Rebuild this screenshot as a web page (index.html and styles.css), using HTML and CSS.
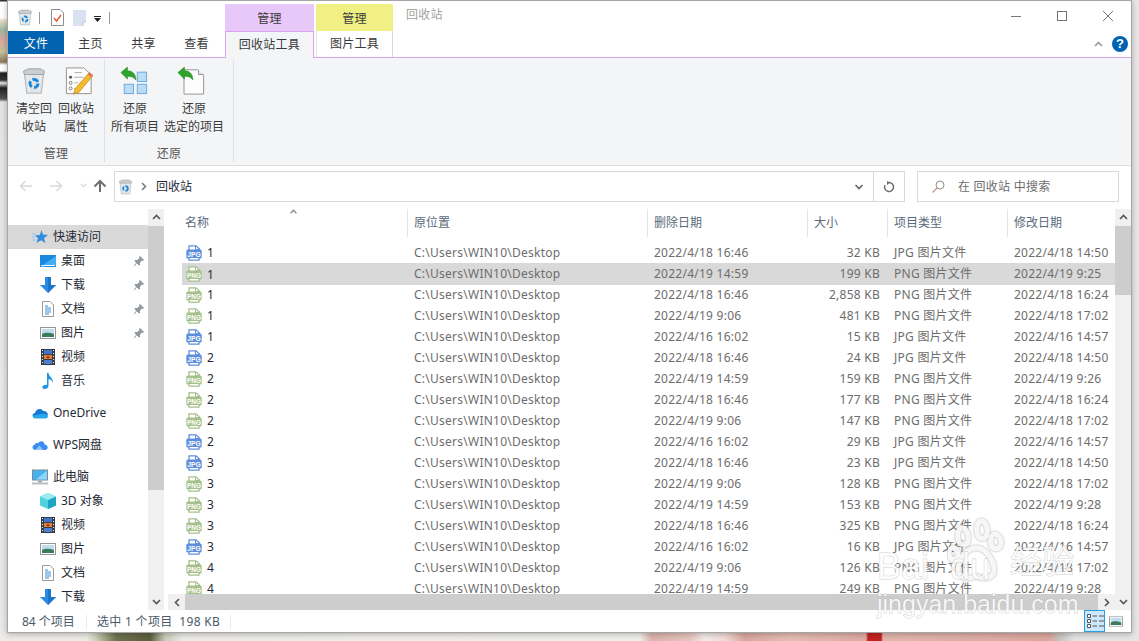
FILE: index.html
```html
<!DOCTYPE html>
<html lang="zh-CN">
<head>
<meta charset="utf-8">
<title>回收站</title>
<link rel="stylesheet" href="styles.css">
</head>
<body class="desktop">
<svg class="defs" width="0" height="0" aria-hidden="true">
  <symbol id="bin" viewBox="0 0 32 34">
    <path d="M4 6 L28 6 L25 32 L7 32 Z" fill="#dfe3e6" stroke="#a3a8ac"/>
    <path d="M3 5 L9 2 L24 2 L29 5 L28 9 L4 9 Z" fill="#c9ced2" stroke="#969a9e"/>
    <path d="M8 10 L10 30 M24 10 L22 30 M12 10 L13 14 M20 10 L19 14" stroke="#f5f6f7" stroke-width="1.200"/>
    <circle cx="16" cy="20" r="5" fill="none" stroke="#1c86d8" stroke-width="3.600" stroke-dasharray="7.500 3"/>
  </symbol>
  <symbol id="checkdoc" viewBox="0 0 13 17">
    <path d="M.5.5 H9 L12.500 4 V16.500 H.5 Z" fill="#fff" stroke="#8c8c8c"/>
    <path d="M3 9 L5.500 12 L10 6" fill="none" stroke="#e2572b" stroke-width="1.400"/>
  </symbol>
  <symbol id="blankdoc" viewBox="0 0 13 16">
    <path d="M0 0 H13 V11 L10 16 H0 Z" fill="#d8e2f1"/>
    <path d="M10 16 V12 H13" fill="#fff" stroke="#b9c8dd"/>
  </symbol>
  <symbol id="props" viewBox="0 0 30 30">
    <path d="M1.500 1 H20 L28 8 V28.500 H1.500 Z" fill="#fdfdfd" stroke="#8f8f8f"/>
    <circle cx="6" cy="11" r="1.600" fill="#555"/><circle cx="6" cy="17" r="1.600" fill="none" stroke="#777"/><circle cx="6" cy="23" r="1.600" fill="none" stroke="#777"/>
    <path d="M10 6 H18 M10 11 H20 M10 17 H14 M10 23 H12" stroke="#a8a8a8"/>
    <path d="M26 6 L30 9 L15 27 L9 29 L11 23 Z" fill="#f4bb2c" stroke="#b9820f" stroke-width=".7"/>
    <path d="M26 6 L30 9 L28.300 11 L24.300 8 Z" fill="#e8706a"/>
  </symbol>
  <symbol id="restoreall" viewBox="0 0 30 30">
    <rect x="18.500" y="5.500" width="10" height="10" fill="#b9dcf8" stroke="#6ba6d8"/>
    <rect x="4.500" y="18.500" width="10" height="10" fill="#b9dcf8" stroke="#6ba6d8"/>
    <rect x="18.500" y="18.500" width="10" height="10" fill="#b9dcf8" stroke="#6ba6d8"/>
    <path d="M1 6 L8 0 V4 C13 4 17 7 17 14 C15 11 12 10 8 10 V13 Z" fill="#2ea52a" stroke="#1c7a1a" stroke-width=".5"/>
  </symbol>
  <symbol id="restoresel" viewBox="0 0 30 30">
    <path d="M7.500 3 H22 L28.500 9 V29 H7.500 Z" fill="#fdfdfd" stroke="#8f8f8f"/>
    <path d="M23 3 V8 H28.500" fill="#e8e8e8" stroke="#8f8f8f"/>
    <path d="M1 6 L8 0 V4 C13 4 17 7 17 14 C15 11 12 10 8 10 V13 Z" fill="#2ea52a" stroke="#1c7a1a" stroke-width=".5"/>
  </symbol>
  <symbol id="jpg" viewBox="0 0 16 16">
    <path d="M3 6 V.8 H10 L13.500 4 V6" fill="#fff" stroke="#5f8fdc" stroke-width="1.300"/>
    <path d="M9.500 1 V4.500 H13.500" fill="none" stroke="#5f8fdc"/>
    <rect x=".3" y="4.500" width="15.400" height="9" rx="1.500" fill="#5f8fdc"/>
    <path d="M3 13 V15.200 H13 V13" fill="#fff" stroke="#5f8fdc" stroke-width="1.300"/>
    <text x="8" y="11.700" class="ftext" textLength="13.500" lengthAdjust="spacingAndGlyphs">JPG</text>
  </symbol>
  <symbol id="png" viewBox="0 0 16 16">
    <path d="M3 6 V.8 H10 L13.500 4 V6" fill="#fff" stroke="#a5c08a" stroke-width="1.300"/>
    <path d="M9.500 1 V4.500 H13.500" fill="none" stroke="#a5c08a"/>
    <rect x=".3" y="4.500" width="15.400" height="9" rx="1.500" fill="#a5c08a"/>
    <path d="M3 13 V15.200 H13 V13" fill="#fff" stroke="#a5c08a" stroke-width="1.300"/>
    <text x="8" y="11.700" class="ftext" textLength="14" lengthAdjust="spacingAndGlyphs">PNG</text>
  </symbol>
  <symbol id="star" viewBox="0 0 16 16">
    <path d="M9.500 1 L11 5.500 L16 6 L12 9 L13.500 14 L9 11.200 L4.500 14 L6 9.300 L3 6.500 L8 5.800 Z" fill="#2f8fdc"/>
    <path d="M0 5 H4 M0 8 H3 M0 11 H4" stroke="#8ec7f2"/>
  </symbol>
  <symbol id="desk" viewBox="0 0 16 12">
    <rect width="16" height="12" fill="#1a8ae0"/>
    <path d="M16 1 V10 H3 Z" fill="#46aef0"/>
    <rect x="1" y="10" width="14" height="1" fill="#fff"/>
    <rect x="1" y="10.500" width="4" height="1" fill="#9ad4f8"/>
  </symbol>
  <symbol id="down" viewBox="0 0 16 16">
    <path d="M5 0 H11 V8 H16 L8 16 L0 8 H5 Z" fill="#2c8be0"/>
    <path d="M8 0 H11 V8 H16 L8 16 Z" fill="#1b74c9"/>
  </symbol>
  <symbol id="doc" viewBox="0 0 12 16">
    <path d="M.5.5 H8 L11.500 4 V15.500 H.5 Z" fill="#fff" stroke="#9a9a9a"/>
    <path d="M3 5 H6 M3 7 H9 M3 9 H9 M3 11 H9 M3 13 H7" stroke="#3a90d8"/>
  </symbol>
  <symbol id="pic" viewBox="0 0 16 12">
    <rect x=".5" y=".5" width="15" height="11" fill="#fff" stroke="#969696"/>
    <rect x="2" y="2" width="12" height="8" fill="#bcdcf0"/>
    <path d="M2 7 C6 5 10 6 14 7 V10 H2 Z" fill="#3d7a5c"/>
  </symbol>
  <symbol id="film" viewBox="0 0 14 16">
    <rect width="14" height="16" fill="#3b3f45"/>
    <rect x="3" y="1" width="8" height="4" fill="#3f74c8"/><rect x="3" y="6" width="8" height="4" fill="#d88a2c"/><rect x="3" y="11" width="8" height="4" fill="#4a7ed0"/>
    <path d="M1 1.500 H2 M1 4.500 H2 M1 7.500 H2 M1 10.500 H2 M1 13.500 H2 M12 1.500 H13 M12 4.500 H13 M12 7.500 H13 M12 10.500 H13 M12 13.500 H13" stroke="#e8e8e8"/>
    <circle cx="7" cy="8" r="1.600" fill="#c62f2f"/>
  </symbol>
  <symbol id="note" viewBox="0 0 12 16">
    <path d="M5 0 H6.500 C7 4 11.500 5 11 10 C10.500 7.500 8.500 6.500 6.500 6 V13 C6.500 15 4.500 16 2.500 16 C.5 16 0 14.500 .5 13.500 C1 12.500 3.500 11.500 5 12 Z" fill="#1e96e8"/>
  </symbol>
  <symbol id="onedrive" viewBox="0 0 16 11">
    <path d="M3.500 10.500 C0 10.500 -.5 6 3 5.500 C4 1.500 9 0 11 3.500 C14 3 16.500 5.500 15.500 8 Z" fill="#1479d0"/>
    <path d="M3.500 11 C1 11 .5 9 1.500 8 L12 6 L16 8 C16 10 15 11 13.500 11 Z" fill="#28a8ea"/>
  </symbol>
  <symbol id="wps" viewBox="0 0 16 11">
    <path d="M3.500 10.500 C0 10.500 -.5 6 2.500 5.500 C3 3.500 5 3 6 4 C7.500 .5 12.500 1 12.500 5 C16 5 17 10 13.500 10.500 Z" fill="#3a8cf0"/>
    <path d="M3 10.500 L7.500 6 L11 10.500 Z" fill="#8cc4ff"/>
  </symbol>
  <symbol id="pc" viewBox="0 0 16 15">
    <rect x=".5" y=".5" width="15" height="10" fill="#45b4ee" stroke="#7a8a96"/>
    <path d="M15 1 V10 H4 Z" fill="#8bd3f7"/>
    <rect x="6" y="11" width="4" height="2" fill="#9aa4ac"/>
    <rect y="13" width="16" height="2" fill="#b6bec4"/>
  </symbol>
  <symbol id="cube" viewBox="0 0 16 16">
    <path d="M8 0 L16 3.500 V12.500 L8 16 L0 12.500 V3.500 Z" fill="#4fd3e0"/>
    <path d="M8 7 L16 3.500 V12.500 L8 16 Z" fill="#1da4c4"/>
    <path d="M8 0 L16 3.500 L8 7 L0 3.500 Z" fill="#9aeaf0"/>
  </symbol>
  <symbol id="pin" viewBox="0 0 10 10">
    <path d="M6 0 L10 4 L9 5 L8 4.500 L6 6.500 L6 9 L5 9.500 L.5 5 L1 4 H3.500 L5.500 2 L5 1 Z" fill="#8f969c"/>
    <path d="M2.500 7 L0 10" stroke="#8f969c"/>
  </symbol>
  <symbol id="chev-up" viewBox="0 0 9 6"><path d="M1 5 L4.500 1.500 L8 5" fill="none" stroke="currentColor" stroke-width="1.600"/></symbol>
  <symbol id="chev-down" viewBox="0 0 9 6"><path d="M1 1 L4.500 4.500 L8 1" fill="none" stroke="currentColor" stroke-width="1.600"/></symbol>
  <symbol id="chev-left" viewBox="0 0 6 9"><path d="M5 1 L1.500 4.500 L5 8" fill="none" stroke="currentColor" stroke-width="1.600"/></symbol>
  <symbol id="chev-right" viewBox="0 0 6 9"><path d="M1 1 L4.500 4.500 L1 8" fill="none" stroke="currentColor" stroke-width="1.600"/></symbol>
  <symbol id="arrow-left" viewBox="0 0 14 12"><path d="M13 6 H2 M6.500 1 L1.500 6 L6.500 11" fill="none" stroke="currentColor" stroke-width="1.500"/></symbol>
  <symbol id="arrow-right" viewBox="0 0 14 12"><path d="M1 6 H12 M7.500 1 L12.500 6 L7.500 11" fill="none" stroke="currentColor" stroke-width="1.500"/></symbol>
  <symbol id="arrow-up" viewBox="0 0 14 14"><path d="M7 13 V2 M1.500 7.500 L7 2 L12.500 7.500" fill="none" stroke="currentColor" stroke-width="2"/></symbol>
</svg>

<div class="window">
  <header class="titlebar">
    <div class="qat">
      <svg class="qat-bin"><use href="#bin"/></svg>
      <i class="qat-sep"></i>
      <svg class="qat-check"><use href="#checkdoc"/></svg>
      <svg class="qat-blank"><use href="#blankdoc"/></svg>
      <svg class="qat-drop" viewBox="0 0 7 6"><path d="M0 0 H7 V1 H0 Z M0 2 H7 L3.500 6 Z" fill="#222"/></svg>
      <i class="qat-sep qat-sep-end"></i>
    </div>
    <div class="ctx ctx-pink">管理</div>
    <div class="ctx ctx-yellow">管理</div>
    <div class="win-title">回收站</div>
    <div class="win-controls">
      <span class="wc"><svg viewBox="0 0 10 10"><path d="M0 5.500 H10" stroke="#777"/></svg></span>
      <span class="wc"><svg viewBox="0 0 10 10"><rect x=".5" y=".5" width="9" height="9" fill="none" stroke="#777"/></svg></span>
      <span class="wc"><svg viewBox="0 0 10 10"><path d="M0 0 L10 10 M10 0 L0 10" stroke="#777"/></svg></span>
    </div>
  </header>

  <div class="tabs">
    <span class="tab tab-file">文件</span>
    <span class="tab">主页</span>
    <span class="tab">共享</span>
    <span class="tab">查看</span>
    <span class="tab tab-active">回收站工具</span>
    <span class="tab tab-pic">图片工具</span>
    <span class="tabs-right">
      <svg class="ribbon-caret"><use href="#chev-up"/></svg>
      <span class="help">?</span>
    </span>
  </div>

  <div class="ribbon">
    <section class="group group-a">
      <div class="btns">
        <div class="rbtn rbtn-a"><svg class="rico rico-bin"><use href="#bin"/></svg><span>清空回</span><span>收站</span></div>
        <div class="rbtn rbtn-a"><svg class="rico rico-props"><use href="#props"/></svg><span>回收站</span><span>属性</span></div>
      </div>
      <div class="glabel">管理</div>
    </section>
    <section class="group group-b">
      <div class="btns">
        <div class="rbtn rbtn-b"><svg class="rico rico-rall"><use href="#restoreall"/></svg><span>还原</span><span>所有项目</span></div>
        <div class="rbtn rbtn-c"><svg class="rico rico-rsel"><use href="#restoresel"/></svg><span>还原</span><span>选定的项目</span></div>
      </div>
      <div class="glabel">还原</div>
    </section>
  </div>

  <div class="navbar">
    <svg class="nav-ico nav-back"><use href="#arrow-left"/></svg>
    <svg class="nav-ico nav-fwd"><use href="#arrow-right"/></svg>
    <svg class="nav-drop"><use href="#chev-down"/></svg>
    <svg class="nav-up"><use href="#arrow-up"/></svg>
    <div class="addr">
      <svg class="addr-bin"><use href="#bin"/></svg>
      <svg class="addr-chev"><use href="#chev-right"/></svg>
      <span class="addr-text">回收站</span>
      <svg class="addr-drop"><use href="#chev-down"/></svg>
      <span class="addr-refresh"><svg viewBox="0 0 12 12"><path d="M6 1.500 A4.500 4.500 0 1 1 2 4" fill="none" stroke="#707070" stroke-width="1.500"/><path d="M4 0 L7.500 1.500 L4 4 Z" fill="#707070"/></svg></span>
    </div>
    <div class="search">
      <svg viewBox="0 0 13 13"><circle cx="8" cy="5" r="4" fill="none" stroke="#909090"/><path d="M5 8 L.5 12.500" stroke="#c49a8c" stroke-width="1.200"/></svg>
      <span>在 回收站 中搜索</span>
    </div>
  </div>

  <div class="main">
    <nav class="side">
      <ul class="tree">
        <li class="ti ti-top ti-sel"><svg class="ti-ico"><use href="#star"/></svg>快速访问</li>
        <li class="ti"><svg class="ti-ico ti-wide"><use href="#desk"/></svg>桌面<svg class="pin"><use href="#pin"/></svg></li>
        <li class="ti"><svg class="ti-ico"><use href="#down"/></svg>下载<svg class="pin"><use href="#pin"/></svg></li>
        <li class="ti"><svg class="ti-ico"><use href="#doc"/></svg>文档<svg class="pin"><use href="#pin"/></svg></li>
        <li class="ti"><svg class="ti-ico"><use href="#pic"/></svg>图片<svg class="pin"><use href="#pin"/></svg></li>
        <li class="ti"><svg class="ti-ico"><use href="#film"/></svg>视频</li>
        <li class="ti"><svg class="ti-ico"><use href="#note"/></svg>音乐</li>
        <li class="ti ti-top ti-gap"><svg class="ti-ico"><use href="#onedrive"/></svg>OneDrive</li>
        <li class="ti ti-top ti-gap"><svg class="ti-ico"><use href="#wps"/></svg>WPS网盘</li>
        <li class="ti ti-top ti-gap"><svg class="ti-ico"><use href="#pc"/></svg>此电脑</li>
        <li class="ti"><svg class="ti-ico"><use href="#cube"/></svg>3D 对象</li>
        <li class="ti"><svg class="ti-ico"><use href="#film"/></svg>视频</li>
        <li class="ti"><svg class="ti-ico"><use href="#pic"/></svg>图片</li>
        <li class="ti"><svg class="ti-ico"><use href="#doc"/></svg>文档</li>
        <li class="ti"><svg class="ti-ico"><use href="#down"/></svg>下载</li>
      </ul>
      <div class="vbar vbar-side">
        <span class="sb-arrow"><svg><use href="#chev-up"/></svg></span>
        <span class="sb-thumb sb-thumb-side"></span>
        <span class="sb-fill"></span>
        <span class="sb-arrow"><svg><use href="#chev-down"/></svg></span>
      </div>
    </nav>

    <section class="files">
      <div class="files-col">
        <div class="fhead">
          <svg class="sort"><use href="#chev-up"/></svg>
          <span class="hname">名称</span><span>原位置</span><span>删除日期</span><span>大小</span><span>项目类型</span><span>修改日期</span>
        </div>
        <div class="rows">
          <div class="row"><span class="c-name"><svg class="fi"><use href="#jpg"/></svg>1</span><span>C:\Users\WIN10\Desktop</span><span>2022/4/18 16:46</span><span class="c-size">32 KB</span><span>JPG 图片文件</span><span>2022/4/18 14:50</span></div>
          <div class="row row-sel"><span class="c-name"><svg class="fi"><use href="#png"/></svg>1</span><span>C:\Users\WIN10\Desktop</span><span>2022/4/19 14:59</span><span class="c-size">199 KB</span><span>PNG 图片文件</span><span>2022/4/19 9:25</span></div>
          <div class="row"><span class="c-name"><svg class="fi"><use href="#png"/></svg>1</span><span>C:\Users\WIN10\Desktop</span><span>2022/4/18 16:46</span><span class="c-size">2,858 KB</span><span>PNG 图片文件</span><span>2022/4/18 16:24</span></div>
          <div class="row"><span class="c-name"><svg class="fi"><use href="#png"/></svg>1</span><span>C:\Users\WIN10\Desktop</span><span>2022/4/19 9:06</span><span class="c-size">481 KB</span><span>PNG 图片文件</span><span>2022/4/18 17:02</span></div>
          <div class="row"><span class="c-name"><svg class="fi"><use href="#jpg"/></svg>1</span><span>C:\Users\WIN10\Desktop</span><span>2022/4/16 16:02</span><span class="c-size">15 KB</span><span>JPG 图片文件</span><span>2022/4/16 14:57</span></div>
          <div class="row"><span class="c-name"><svg class="fi"><use href="#jpg"/></svg>2</span><span>C:\Users\WIN10\Desktop</span><span>2022/4/18 16:46</span><span class="c-size">24 KB</span><span>JPG 图片文件</span><span>2022/4/18 14:50</span></div>
          <div class="row"><span class="c-name"><svg class="fi"><use href="#png"/></svg>2</span><span>C:\Users\WIN10\Desktop</span><span>2022/4/19 14:59</span><span class="c-size">159 KB</span><span>PNG 图片文件</span><span>2022/4/19 9:26</span></div>
          <div class="row"><span class="c-name"><svg class="fi"><use href="#png"/></svg>2</span><span>C:\Users\WIN10\Desktop</span><span>2022/4/18 16:46</span><span class="c-size">177 KB</span><span>PNG 图片文件</span><span>2022/4/18 16:24</span></div>
          <div class="row"><span class="c-name"><svg class="fi"><use href="#png"/></svg>2</span><span>C:\Users\WIN10\Desktop</span><span>2022/4/19 9:06</span><span class="c-size">147 KB</span><span>PNG 图片文件</span><span>2022/4/18 17:02</span></div>
          <div class="row"><span class="c-name"><svg class="fi"><use href="#jpg"/></svg>2</span><span>C:\Users\WIN10\Desktop</span><span>2022/4/16 16:02</span><span class="c-size">29 KB</span><span>JPG 图片文件</span><span>2022/4/16 14:57</span></div>
          <div class="row"><span class="c-name"><svg class="fi"><use href="#jpg"/></svg>3</span><span>C:\Users\WIN10\Desktop</span><span>2022/4/18 16:46</span><span class="c-size">23 KB</span><span>JPG 图片文件</span><span>2022/4/18 14:50</span></div>
          <div class="row"><span class="c-name"><svg class="fi"><use href="#png"/></svg>3</span><span>C:\Users\WIN10\Desktop</span><span>2022/4/19 9:06</span><span class="c-size">128 KB</span><span>PNG 图片文件</span><span>2022/4/18 17:02</span></div>
          <div class="row"><span class="c-name"><svg class="fi"><use href="#png"/></svg>3</span><span>C:\Users\WIN10\Desktop</span><span>2022/4/19 14:59</span><span class="c-size">153 KB</span><span>PNG 图片文件</span><span>2022/4/19 9:28</span></div>
          <div class="row"><span class="c-name"><svg class="fi"><use href="#png"/></svg>3</span><span>C:\Users\WIN10\Desktop</span><span>2022/4/18 16:46</span><span class="c-size">325 KB</span><span>PNG 图片文件</span><span>2022/4/18 16:24</span></div>
          <div class="row"><span class="c-name"><svg class="fi"><use href="#jpg"/></svg>3</span><span>C:\Users\WIN10\Desktop</span><span>2022/4/16 16:02</span><span class="c-size">16 KB</span><span>JPG 图片文件</span><span>2022/4/16 14:57</span></div>
          <div class="row"><span class="c-name"><svg class="fi"><use href="#png"/></svg>4</span><span>C:\Users\WIN10\Desktop</span><span>2022/4/19 9:06</span><span class="c-size">126 KB</span><span>PNG 图片文件</span><span>2022/4/18 17:02</span></div>
          <div class="row"><span class="c-name"><svg class="fi"><use href="#png"/></svg>4</span><span>C:\Users\WIN10\Desktop</span><span>2022/4/19 14:59</span><span class="c-size">249 KB</span><span>PNG 图片文件</span><span>2022/4/19 9:28</span></div>
        </div>
        <div class="hbar">
          <span class="sb-arrow-h"><svg><use href="#chev-left"/></svg></span>
          <span class="hthumb"></span>
          <span class="sb-arrow-h"><svg><use href="#chev-right"/></svg></span>
        </div>
      </div>
      <div class="vbar">
        <span class="sb-arrow"><svg><use href="#chev-up"/></svg></span>
        <span class="sb-thumb sb-thumb-main"></span>
        <span class="sb-fill"></span>
        <span class="sb-arrow"><svg><use href="#chev-down"/></svg></span>
      </div>
    </section>
  </div>

  <footer class="status">
    <span class="st-count">84 个项目</span>
    <span class="st-sel">选中 1 个项目&nbsp;&nbsp;198 KB</span>
    <span class="views">
      <span class="view view-on"><svg viewBox="0 0 18 16"><path d="M1.500 1.500 H4.500 V4.500 H1.500 Z M1.500 6.500 H4.500 V9.500 H1.500 Z M1.500 11.500 H4.500 V14.500 H1.500 Z" fill="#fff" stroke="#555"/><path d="M6.500 3 H11 M13 3 H18 M6.500 8 H11 M13 8 H18 M6.500 13 H11 M13 13 H18" stroke="#555"/></svg></span>
      <span class="view view-thumb"><svg viewBox="0 0 16 12"><use href="#pic"/></svg></span>
    </span>
  </footer>
</div>

<div class="watermark">
  <svg class="wm-paw" viewBox="0 0 56 66"><path d="M28 30 C38 30 46 42 46 52 C46 60 38 62 28 58 C18 62 10 60 10 52 C10 42 18 30 28 30 Z M14 10 C19 10 21 17 20 23 C19 28 12 28 10 22 C9 17 10 11 14 10 Z M33 3 C38 3 40 10 39 16 C38 22 31 22 29 16 C28 10 29 4 33 3 Z M46 16 C50 16 54 20 53 26 C52 32 45 32 43 27 C42 22 43 17 46 16 Z M4 30 C8 29 10 33 10 37 C10 42 4 43 2 39 C0 35 1 31 4 30 Z" fill="none" stroke="rgba(255,255,255,.9)" stroke-width="5"/></svg>
  <span class="wm-bai">Bai</span>
  <span class="wm-du">du</span>
  <span class="wm-jy">经验</span>
  <span class="wm-url">jingyan.baidu.com</span>
</div>
</body>
</html>
```

FILE: styles.css
```css
* { box-sizing: border-box; }
html, body { margin: 0; padding: 0; }
body {
  width: 1139px;
  height: 641px;
  overflow: hidden;
  position: relative;
  font-family: "Noto Sans", "Noto Sans CJK SC", sans-serif;
  font-size: 12px;
  letter-spacing: .25px;
  color: #1f2a36;
}
.desktop {
  background:
    linear-gradient(90deg,
      #ecebe7 0, #ecebe7 87px, #cfd4bc 95px, #6f7350 116px, #5c5f3e 150px, #c9cdb8 165px, #ecebe7 182px,
      #f0efec 640px, #dcb2aa 652px, #e8c6bf 690px, #f3ece9 705px, #f0dad5 725px, #d9a79f 745px, #e6bdb5 790px, #dcaaa2 866px,
      #c4211f 868px, #c4211f 881px, #e2b6ae 883px, #dca89f 1050px, #c9c6c4 1060px, #e6e6e6 1075px, #e6e6e6 1139px)
      left bottom / 100% 9px no-repeat,
    linear-gradient(180deg,
      #333 0, #333 1px, #fff 2px, #fff 18px, #e8dcc8 20px, #9fb8a0 30px, #d9a8a0 40px, #c8c098 52px, #8a7a5a 62px, #fff 65px, #fff 71px,
      #222 73px, #333 80px, #e8e8e8 83px, #222 88px, #555 99px, #e5e5e5 102px, #e9e9e9 641px)
      left top / 7px 100% no-repeat,
    #e8e8e8;
}
.defs { position: absolute; }
.ftext { font: bold 6.5px "Liberation Sans", sans-serif; fill: #fff; text-anchor: middle; letter-spacing: 0; }

.window {
  margin-left: 7px;
  width: 1125px;
  height: 633px;
  background: #fff;
  border: 1px solid #a6a6a6;
  box-shadow: 0 1px 6px rgba(0, 0, 0, .28);
  display: flex;
  flex-direction: column;
}

/* title bar */
.titlebar { height: 30px; display: flex; flex: none; }
.qat { width: 217px; display: flex; align-items: center; padding: 3px 0 0 9px; flex: none; }
.qat-bin { width: 16px; height: 17px; }
.qat-sep { width: 1px; height: 12px; background: #9a9a9a; margin-left: 6px; }
.qat-check { width: 13px; height: 17px; margin-left: 11px; }
.qat-blank { width: 13px; height: 16px; margin-left: 9px; }
.qat-drop { width: 7px; height: 6px; margin-left: 8px; margin-top: 3px; }
.qat-sep-end { margin-left: 8px; }
.ctx { align-self: flex-end; height: 27px; display: flex; align-items: center; justify-content: center; color: #3c3c3c; flex: none; }
.ctx-pink { width: 89px; background: #e8c8f8; }
.ctx-yellow { width: 77px; margin-left: 2px; background: #f0f084; }
.win-title { margin-left: 13px; color: #a3a3a3; line-height: 28px; flex: 1; }
.win-controls { display: flex; }
.wc { width: 46px; height: 30px; display: flex; align-items: center; justify-content: center; }
.wc svg { width: 10px; height: 10px; }

/* tabs */
.tabs { height: 27px; display: flex; border-bottom: 1px solid #dca3ec; flex: none; }
.tab { width: 53px; height: 26px; display: flex; align-items: center; justify-content: center; color: #3a3a3a; flex: none; padding-bottom: 2px; }
.tab-file { width: 56px; height: 23px; background: #0063b1; color: #fff; padding-bottom: 0; }
.tab-active { width: 89px; height: 27px; margin-left: 2px; background: #f4f5f7; border: 1px solid #dca3ec; border-bottom: 0; padding-bottom: 2px; }
.tab-pic { width: 77px; margin-left: 2px; border-left: 1px solid #e4e4e4; border-right: 1px solid #d8d8d8; }
.tabs-right { margin-left: auto; display: flex; align-items: center; padding: 0 3px 0 0; height: 26px; }
.ribbon-caret { width: 9px; height: 6px; color: #9a9a9a; margin-right: 9px; }
.help { width: 16px; height: 16px; border-radius: 50%; background: #0063b1; color: #fff; font: bold 13px/16px "Liberation Sans", sans-serif; text-align: center; }

/* ribbon */
.ribbon { height: 108px; background: #f4f5f7; border-bottom: 1px solid #dcdcdc; display: flex; align-items: flex-start; padding-top: 2px; flex: none; }
.group { height: 102px; border-right: 1px solid #dfe0e2; display: flex; flex-direction: column; flex: none; }
.group-a { width: 97px; padding-left: 5px; }
.group-b { width: 129px; padding-left: 5px; }
.btns { display: flex; flex: 1; min-height: 0; }
.rbtn { display: flex; flex-direction: column; align-items: center; padding-top: 7px; color: #3a3a3a; line-height: 18px; white-space: nowrap; letter-spacing: 0; }
.rbtn-a { width: 42px; }
.rbtn-b { width: 50px; }
.rbtn-c { width: 68px; }
.rico { width: 28px; height: 28px; margin-bottom: 5px; flex: none; }
.rico-bin { width: 26px; }
.rico-props { margin-left: 6px; }
.rico-rall { margin-right: 2px; }
.rico-rsel { margin-right: 6px; }
.glabel { height: 18px; line-height: 20px; text-align: center; color: #555; margin-left: -5px; }

/* address row */
.navbar { height: 43px; display: flex; align-items: flex-start; padding: 5px 0 0 11px; flex: none; }
.nav-ico { width: 14px; height: 12px; margin-top: 9px; color: #d8d8d8; flex: none; }
.nav-fwd { margin-left: 16px; }
.nav-drop { width: 7px; height: 5px; margin: 12px 0 0 17px; color: #d8d8d8; flex: none; }
.nav-up { width: 14px; height: 14px; margin: 8px 0 0 6px; color: #6e6e6e; flex: none; }
.addr { width: 791px; height: 31px; margin-left: 7px; border: 1px solid #d9d9d9; display: flex; align-items: center; flex: none; }
.addr-bin { width: 15px; height: 16px; margin-left: 3px; }
.addr-chev { width: 6px; height: 9px; margin-left: 8px; color: #7c7c7c; }
.addr-text { margin-left: 9px; flex: 1; letter-spacing: 0; padding-bottom: 2px; }
.addr-drop { width: 10px; height: 6px; color: #666; margin-right: 9px; }
.addr-refresh { width: 31px; height: 29px; border-left: 1px solid #d9d9d9; display: flex; align-items: center; justify-content: center; }
.addr-refresh svg { width: 12px; height: 12px; }
.search { width: 202px; height: 31px; margin-left: 12px; border: 1px solid #d9d9d9; display: flex; align-items: center; padding-left: 14px; color: #6d6d6d; flex: none; }
.search svg { width: 13px; height: 13px; margin-right: 13px; }
.search span { padding-bottom: 2px; }

/* main */
.main { height: 401px; display: flex; flex: none; }
.side { width: 156px; display: flex; flex: none; }
.tree { width: 140px; list-style: none; margin: 16px 0 0; padding: 0; overflow: hidden; flex: none; }
.ti { height: 24px; display: flex; align-items: center; padding: 0 0 2px 32px; position: relative; letter-spacing: 0; }
.ti-top { padding-left: 24px; }
.ti-sel { background: #d9d9d9; }
.ti-gap { margin-top: 8px; }
.ti-ico { width: 16px; height: 16px; margin: 2px 5px 0 0; flex: none; }
.pin { position: absolute; left: 126px; top: 7px; width: 10px; height: 10px; }
.vbar { width: 16px; background: #f0f0f0; display: flex; flex-direction: column; flex: none; }
.sb-arrow { height: 16px; display: flex; align-items: center; justify-content: center; color: #555; flex: none; }
.sb-arrow svg { width: 9px; height: 6px; }
.sb-thumb { background: #cdcdcd; margin: 1px 0; display: block; flex: none; }
.sb-thumb-side { height: 264px; }
.sb-thumb-main { height: 69px; }
.sb-fill { flex: 1; }

.files { flex: 1; display: flex; min-width: 0; }
.files-col { flex: 1; display: flex; flex-direction: column; min-width: 0; }
.fhead, .row { display: grid; grid-template-columns: 226px 240px 160px 80px 120px 106px; margin-left: 18px; }
.fhead { height: 27px; color: #5a6a7a; position: relative; flex: none; letter-spacing: 0; }
.fhead span { border-left: 1px solid #e5e5e5; padding-left: 6px; line-height: 28px; margin-left: -1px; }
.fhead .hname { border-left: 0; padding-left: 4px; }
.sort { position: absolute; left: 107px; top: 0; width: 9px; height: 5px; color: #8a8a8a; }
.rows { height: 352px; margin-top: 6px; overflow: hidden; flex: none; }
.row { height: 21px; line-height: 21px; color: #6d6d6d; white-space: nowrap; }
.row > span { padding-left: 6px; overflow: hidden; }
.row-sel { background: #d9d9d9; height: 22px; margin-bottom: -1px; }
.row > .c-name { padding-left: 4px; color: #1f2a36; display: flex; align-items: center; }
.fi { width: 16px; height: 16px; margin-right: 5px; flex: none; }
.row > .c-size { text-align: right; padding: 0 8px 0 0; }
.hbar { height: 16px; margin-left: 4px; background: #f0f0f0; display: flex; flex: none; }
.sb-arrow-h { width: 17px; display: flex; align-items: center; justify-content: center; color: #555; flex: none; }
.sb-arrow-h svg { width: 6px; height: 9px; }
.hthumb { flex: 1; background: #cdcdcd; }

/* status */
.status { flex: 1; display: flex; align-items: center; position: relative; color: #4a5a6a; }
.st-count { margin: 2px 0 0 14px; width: 65px; border-right: 1px solid #e8e8e8; line-height: 14px; letter-spacing: 0; }
.st-sel { margin: 2px 0 0 10px; padding-right: 10px; border-right: 1px solid #e8e8e8; line-height: 14px; letter-spacing: .3px; }
.views { margin-left: auto; display: flex; align-items: center; height: 100%; padding-right: 8px; }
.view { width: 21px; height: 100%; display: flex; align-items: center; justify-content: center; }
.view svg { width: 18px; height: 16px; }
.view-thumb { width: 14px; margin-left: 4px; }
.view-thumb svg { width: 14px; height: 11px; }
.view-on { background: #cce8ff; border: 1px solid #26a0da; }

/* watermark lies over the window */
.watermark { position: absolute; left: 860px; top: 510px; width: 240px; height: 125px; pointer-events: none; color: rgba(255, 255, 255, .85); font-family: "Liberation Sans", sans-serif; letter-spacing: 0; -webkit-text-stroke: 1px rgba(175, 175, 175, .55); paint-order: stroke fill; }
.watermark span { position: absolute; line-height: 1; white-space: nowrap; }
.wm-paw { position: absolute; left: 88px; top: 8px; width: 56px; height: 66px; filter: drop-shadow(0 0 1px rgba(90, 90, 90, .6)); }
.wm-bai { left: 17px; top: 39px; font-size: 36px; }
.wm-du { left: 90px; top: 39px; font-size: 36px; }
.wm-jy { left: 150px; top: 33px; font: 32px/1 "Noto Sans CJK SC", sans-serif; }
.wm-url { left: 17px; top: 82px; font-size: 25px; }
```
